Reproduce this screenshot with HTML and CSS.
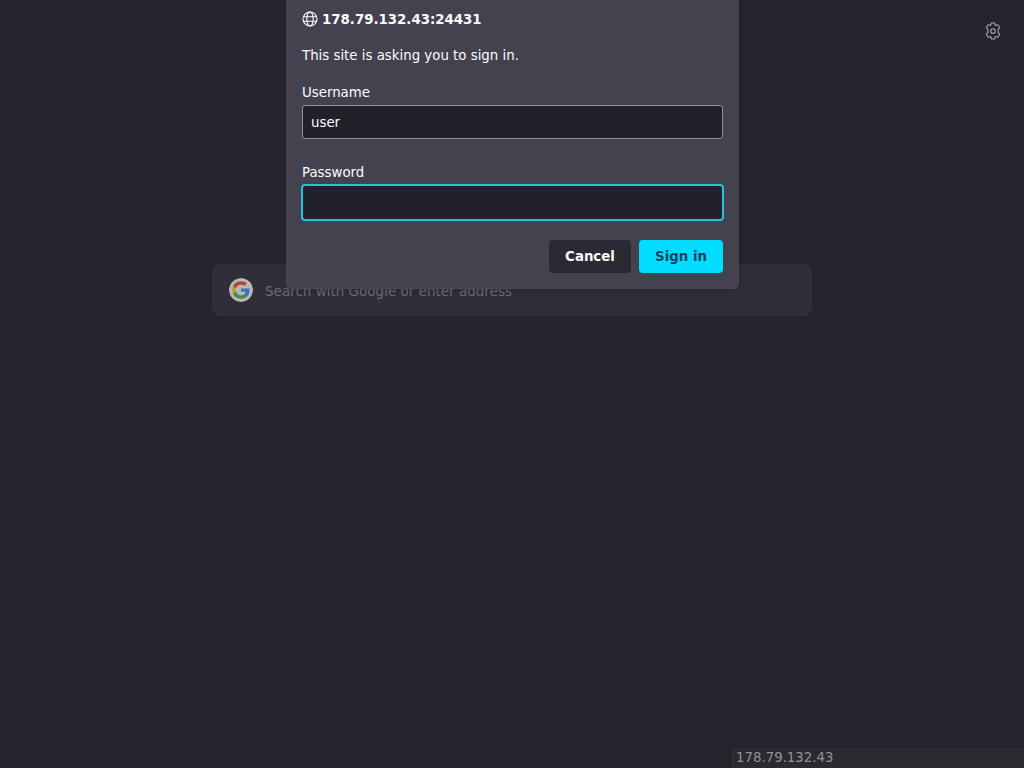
FILE: index.html
```html
<!DOCTYPE html>
<html lang="en">
<head>
<meta charset="utf-8">
<title>New Tab</title>
<link rel="stylesheet" href="styles.css">
</head>
<body>
<main class="page">
  <div class="search">
    <svg class="g-logo" viewBox="0 0 24 24" width="24" height="24">
      <circle cx="12" cy="12" r="12" fill="#b9b7b4"/>
      <path d="M20.500 12.200c0-.6-.1-1.200-.2-1.800H12v3.400h4.800c-.2 1.100-.8 2-1.800 2.700v2.200h2.900c1.700-1.600 2.600-3.800 2.600-6.500z" fill="#3f6fc4"/>
      <path d="M12 20.800c2.400 0 4.400-.8 5.900-2.200L15 16.400c-.8.5-1.800.9-3 .9-2.300 0-4.300-1.600-5-3.700H4v2.300c1.500 2.900 4.500 4.900 8 4.900z" fill="#478c52"/>
      <path d="M7 13.600c-.4-1.100-.4-2.200 0-3.300V8H4c-1.200 2.500-1.200 5.400 0 7.900z" fill="#bd9c38"/>
      <path d="M12 6.700c1.300 0 2.500.5 3.400 1.300l2.500-2.500C16.400 4.100 14.400 3.200 12 3.200 8.500 3.200 5.500 5.200 4 8l3 2.300c.7-2.100 2.700-3.600 5-3.600z" fill="#b34839"/>
    </svg>
    <span class="search-text">Search with Google or enter address</span>
  </div>
</main>

<button class="gear" type="button" aria-label="Settings">
  <svg viewBox="0 0 18 18" width="18" height="18" fill="none" stroke="currentColor" stroke-width="1.100" stroke-linejoin="round">
    <path d="M7.500 1h3l.9 2.500 2.500-.8 1.800 3-1.700 2a5.500 5.500 0 0 1 0 2.600l1.700 2-1.800 3-2.500-.8-.9 2.500h-3l-.9-2.500-2.500.8-1.800-3 1.700-2a5.500 5.500 0 0 1 0-2.600l-1.700-2 1.800-3 2.500.8z"/>
    <circle cx="9" cy="9" r="2.300"/>
  </svg>
</button>

<section class="dialog" role="dialog" aria-label="Sign in">
  <header class="dialog-head">
    <svg class="globe" viewBox="0 0 16 16" width="16" height="16" fill="none" stroke="currentColor" stroke-width="1.100">
      <circle cx="8" cy="8" r="7"/>
      <ellipse cx="8" cy="8" rx="3.200" ry="7"/>
      <path d="M1.400 5.800h13.200M1.400 10.200h13.200"/>
    </svg>
    <span class="host">178.79.132.43:24431</span>
  </header>
  <p class="message">This site is asking you to sign in.</p>
  <label class="field">
    <span class="field-label">Username</span>
    <input class="input" type="text" value="user">
  </label>
  <label class="field">
    <span class="field-label">Password</span>
    <span class="input input-focus"></span>
  </label>
  <div class="actions">
    <button class="btn btn-cancel" type="button">Cancel</button>
    <button class="btn btn-primary" type="button">Sign in</button>
  </div>
</section>

<div class="status">178.79.132.43</div>
</body>
</html>
```

FILE: styles.css
```css
* { box-sizing: border-box; }

html, body {
  margin: 0;
  height: 100%;
  overflow: hidden;
}

body {
  background: #26252e;
  color: #fbfbfe;
  font-family: "DejaVu Sans", sans-serif;
  font-size: 13.33px;
}

.page {
  display: flex;
  justify-content: center;
  padding-top: 264px;
}

.search {
  width: 600px;
  height: 52px;
  display: flex;
  align-items: center;
  gap: 12px;
  padding-left: 17px;
  background: #302f39;
  border-radius: 8px;
}

.g-logo { flex: none; border-radius: 50%; }

.search-text {
  padding-top: 2px;
  color: #6d6c76;
  font-size: 13.500px;
}

.gear {
  position: absolute;
  top: 15px;
  right: 15px;
  width: 32px;
  height: 32px;
  display: flex;
  align-items: center;
  justify-content: center;
  padding: 0;
  background: none;
  border: 0;
  color: #a6a5ab;
}

.dialog {
  position: absolute;
  top: -10px;
  left: 286px;
  width: 453px;
  height: 299px;
  padding: 19px 15px 15px;
  background: #44424f;
  border: 1px solid #484753;
  border-radius: 0 0 5px 5px;
  box-shadow: 0 1px 6px rgba(20, 19, 26, 0.3);
  display: flex;
  flex-direction: column;
}

.dialog-head {
  display: flex;
  align-items: center;
  gap: 4px;
  height: 18px;
}

.globe { flex: none; }

.host { font-weight: 700; }

.message {
  margin: 18px 0 0;
  line-height: 20px;
}

.field {
  display: flex;
  flex-direction: column;
  margin-top: 17px;
}

.field + .field { margin-top: 24px; }

.field-label {
  line-height: 20px;
  margin-bottom: 2px;
}

.input {
  display: block;
  width: 421px;
  height: 34px;
  padding: 0 8px;
  background: #22212a;
  border: 1px solid #8f8f9d;
  border-radius: 3px;
  color: #fbfbfe;
  font: inherit;
  outline: none;
}

.input-focus {
  width: 423px;
  height: 37px;
  margin: -1px 0 0 -1px;
  border: 2px solid #1fc4dd;
  border-radius: 4px;
}

.actions {
  display: flex;
  justify-content: flex-end;
  gap: 8px;
  margin-top: 19px;
}

.btn {
  height: 33px;
  padding: 0;
  border: 0;
  border-radius: 4px;
  font-family: inherit;
  font-size: 13.33px;
  font-weight: 700;
}

.btn-cancel {
  width: 82px;
  background: #2b2a33;
  color: #fbfbfe;
}

.btn-primary {
  width: 84px;
  background: #00ddff;
  color: #15415f;
}

.status {
  position: absolute;
  right: 0;
  bottom: 0;
  width: 294px;
  height: 21px;
  padding-left: 5px;
  background: #2b2a2f;
  border-top: 1px solid #1f1e25;
  border-left: 1px solid #1f1e25;
  color: #94939a;
  line-height: 19px;
}
```
